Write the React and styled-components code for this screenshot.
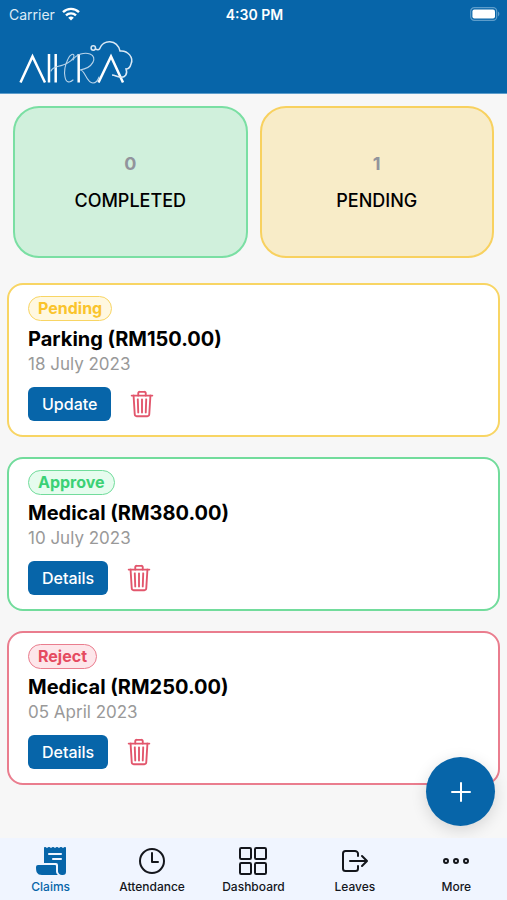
import React from "react";
import styled, { createGlobalStyle } from "styled-components";
import {
  IoAddOutline,
  IoEllipsisHorizontalOutline,
  IoGridOutline,
  IoLogOutOutline,
  IoReceipt,
  IoTimeOutline,
  IoTrashOutline,
} from "react-icons/io5";

const colors = {
  primary: "#0765a9",
  danger: "#e2566c",
};

const stats = [
  { label: "COMPLETED", value: 0, border: "#7adfa3", background: "#d0f0dc" },
  { label: "PENDING", value: 1, border: "#f8d15f", background: "#f8ecc8" },
];

const statuses = {
  Pending: { color: "#fac42c", border: "#f8d564", background: "#fff8e0" },
  Approve: { color: "#3bd175", border: "#72dc9c", background: "#e6fcee" },
  Reject: { color: "#e54a60", border: "#ea7d8e", background: "#fde6ea" },
};

const claims = [
  { status: "Pending", title: "Parking (RM150.00)", date: "18 July 2023", action: "Update" },
  { status: "Approve", title: "Medical (RM380.00)", date: "10 July 2023", action: "Details" },
  { status: "Reject", title: "Medical (RM250.00)", date: "05 April 2023", action: "Details" },
];

const tabs = [
  { label: "Claims", Icon: IoReceipt, active: true },
  { label: "Attendance", Icon: IoTimeOutline },
  { label: "Dashboard", Icon: IoGridOutline },
  { label: "Leaves", Icon: IoLogOutOutline },
  { label: "More", Icon: IoEllipsisHorizontalOutline },
];

const GlobalStyle = createGlobalStyle`
  * {
    box-sizing: border-box;
  }

  body {
    margin: 0;
    background: #f7f7f7;
    font-family: Inter, "Liberation Sans", sans-serif;
    color: #000;
  }

  button {
    font-family: inherit;
    cursor: pointer;
  }
`;

const Page = styled.div`
  display: flex;
  flex-direction: column;
  min-height: 100vh;
`;

const Header = styled.header`
  background: ${colors.primary};
  border-bottom: 1px solid #5d9dcb;
  color: #fff;
`;

const StatusBar = styled.div`
  display: grid;
  grid-template-columns: 1fr auto 1fr;
  align-items: center;
  height: 28px;
  padding: 0 7px 0 9px;
  font-size: 14px;
`;

const Carrier = styled.div`
  display: flex;
  align-items: center;
  gap: 7px;
  color: #dcebf6;
`;

const Clock = styled.div`
  font-weight: 600;
`;

const Battery = styled.div`
  display: flex;
  justify-content: flex-end;
`;

const Toolbar = styled.div`
  display: flex;
  align-items: center;
  height: 65px;
  padding: 4px 16px 0;
`;

const Content = styled.main`
  flex: 1;
  padding: 12px 7px 32px;
`;

const Stats = styled.section`
  display: grid;
  grid-template-columns: 1fr 1fr;
  gap: 12px;
  padding: 0 6px;
  margin-bottom: 25px;
`;

const StatCard = styled.div`
  display: flex;
  flex-direction: column;
  align-items: center;
  justify-content: center;
  gap: 13px;
  height: 152px;
  border: 2px solid ${(props) => props.$border};
  border-radius: 26px;
  background: ${(props) => props.$background};
`;

const StatValue = styled.div`
  font-size: 18px;
  font-weight: 700;
  line-height: 24px;
  color: #92949c;
`;

const StatLabel = styled.div`
  font-size: 18px;
  font-weight: 500;
  line-height: 24px;
`;

const ClaimList = styled.section`
  display: flex;
  flex-direction: column;
  gap: 20px;
`;

const ClaimCard = styled.article`
  padding: 11px 19px 14px;
  border: 2px solid ${(props) => props.$border};
  border-radius: 16px;
  background: #fff;
`;

const Badge = styled.span`
  display: block;
  width: fit-content;
  padding: 0 9px;
  border: 1px solid ${(props) => props.$status.border};
  border-radius: 13px;
  background: ${(props) => props.$status.background};
  color: ${(props) => props.$status.color};
  font-size: 16px;
  font-weight: 700;
  line-height: 23px;
`;

const ClaimTitle = styled.h2`
  margin: 5px 0 0;
  font-size: 20px;
  font-weight: 700;
  line-height: 26px;
`;

const ClaimDate = styled.div`
  margin-bottom: 10px;
  color: #999;
  font-size: 17px;
  line-height: 25px;
`;

const Actions = styled.div`
  display: flex;
  align-items: center;
  gap: 16px;
`;

const ActionButton = styled.button`
  height: 34px;
  padding: 0 14px;
  border: 0;
  border-radius: 6px;
  background: ${colors.primary};
  color: #fff;
  font-size: 16px;
  font-weight: 500;
`;

const DeleteButton = styled.button`
  display: flex;
  padding: 0;
  border: 0;
  background: none;
  color: ${colors.danger};
  font-size: 30px;
`;

const AddButton = styled.button`
  position: fixed;
  right: 12px;
  bottom: 74px;
  display: flex;
  align-items: center;
  justify-content: center;
  width: 69px;
  height: 69px;
  padding: 0;
  border: 0;
  border-radius: 50%;
  background: ${colors.primary};
  color: #fff;
  font-size: 32px;
  box-shadow: 0 4px 16px rgba(0, 0, 0, 0.14);
`;

const TabBar = styled.nav`
  position: sticky;
  bottom: 0;
  display: grid;
  grid-template-columns: repeat(5, 1fr);
  height: 62px;
  background: #f0f5ff;
`;

const Tab = styled.a`
  display: flex;
  flex-direction: column;
  align-items: center;
  gap: 2px;
  padding-top: 7px;
  color: ${(props) => (props.$active ? colors.primary : "#14161c")};
  font-size: 12px;
  font-weight: 500;
  line-height: 16px;
  text-decoration: none;

  svg {
    font-size: 32px;
  }
`;

const WifiIcon = () => (
  <svg width="18" height="14" viewBox="0 0 18 14" fill="none" stroke="#fff" strokeWidth="2.4" aria-hidden="true">
    <path d="M1 5.2a11.4 11.4 0 0 1 16 0" />
    <path d="M4 8.4a7.2 7.2 0 0 1 10 0" />
    <path d="M9 13.6 6.2 10.8a4 4 0 0 1 5.6 0Z" fill="#fff" stroke="none" />
  </svg>
);

const BatteryIcon = () => (
  <svg width="30" height="14" viewBox="0 0 30 14" aria-label="Battery full">
    <rect x="0.7" y="0.7" width="26" height="12.6" rx="3.6" fill="none" stroke="#5d9dcb" strokeWidth="1.2" />
    <rect x="2.4" y="2.4" width="22.6" height="9.2" rx="2" fill="#fff" />
    <path d="M28 4.6c1.9.9 1.9 3.9 0 4.8Z" fill="#5d9dcb" />
  </svg>
);

const Logo = () => (
  <svg width="120" height="46" viewBox="0 0 120 46" fill="none" stroke="#fff" role="img" aria-label="AIHRA">
    <g strokeWidth="2.5">
      <path d="M4.5 42.5 16.5 16.5 29 42.5" />
      <path d="M33 14v28.5M39.7 14v28.5M62.7 14v28.5" />
      <path d="M82.5 42.5 95 16.5 107 42.5" />
    </g>
    <g strokeWidth="1.1" stroke="#b9d4ea" strokeLinecap="round">
      <path d="M35 31c2-5 7-4 12-6 6-2 11-6 11-9 0-3-4-2-6 3-3 6-4 13-3 18 1 6 5 6 8 3" />
      <path d="M57 20c3-6 12-8 17-6 8 3 3 14-10 16 5-1 6 13 13 13 3 0 5-3 6-6" />
    </g>
    <g strokeWidth="1.5" stroke="#dbe9f5">
      <circle cx="77.3" cy="8" r="2.2" />
      <path d="M79.5 9c2 1 3 1 4 0C87-1 101-1 104 11c8-1 14 7 11 13-1 4-3 5-5 5 2 5-1 9-6 8-3 0-5-2-8-2" />
    </g>
  </svg>
);

const Claim = ({ claim }) => {
  const status = statuses[claim.status];

  return (
    <ClaimCard $border={status.border}>
      <Badge $status={status}>{claim.status}</Badge>
      <ClaimTitle>{claim.title}</ClaimTitle>
      <ClaimDate>{claim.date}</ClaimDate>
      <Actions>
        <ActionButton type="button">{claim.action}</ActionButton>
        <DeleteButton type="button" aria-label={`Delete ${claim.title}`}>
          <IoTrashOutline />
        </DeleteButton>
      </Actions>
    </ClaimCard>
  );
};

const App = () => (
  <>
    <GlobalStyle />
    <Page>
      <Header>
        <StatusBar>
          <Carrier>
            Carrier
            <WifiIcon />
          </Carrier>
          <Clock>4:30 PM</Clock>
          <Battery>
            <BatteryIcon />
          </Battery>
        </StatusBar>
        <Toolbar>
          <Logo />
        </Toolbar>
      </Header>

      <Content>
        <Stats>
          {stats.map((stat) => (
            <StatCard key={stat.label} $border={stat.border} $background={stat.background}>
              <StatValue>{stat.value}</StatValue>
              <StatLabel>{stat.label}</StatLabel>
            </StatCard>
          ))}
        </Stats>
        <ClaimList>
          {claims.map((claim) => (
            <Claim key={claim.title} claim={claim} />
          ))}
        </ClaimList>
      </Content>

      <AddButton type="button" aria-label="Add claim">
        <IoAddOutline />
      </AddButton>

      <TabBar>
        {tabs.map(({ label, Icon, active }) => (
          <Tab key={label} href={`#${label.toLowerCase()}`} $active={active}>
            <Icon />
            {label}
          </Tab>
        ))}
      </TabBar>
    </Page>
  </>
);

export default App;
